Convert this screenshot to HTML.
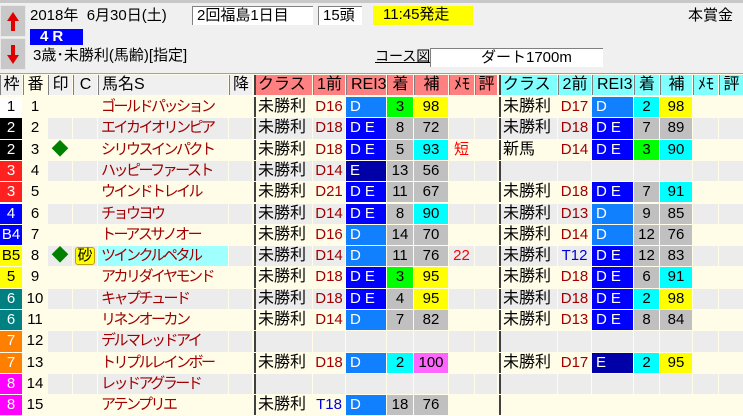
<!DOCTYPE html>
<html><head><meta charset="utf-8"><style>
*{margin:0;padding:0;box-sizing:border-box}
body{width:743px;height:416px;overflow:hidden;background:#fffde8;font-family:"Liberation Sans","Noto Sans CJK JP",sans-serif;position:relative}
.top{position:absolute;left:0;top:0;width:743px;height:74px;background:#f0f0f0;border-top:3px solid #c8c8c8;border-bottom:1px solid #a0a0a0}
.a{position:absolute;font-size:15px;color:#000;white-space:nowrap;line-height:18px}
.btn{position:absolute;left:0;width:26px;height:32px;background:#c8c8c8;border:1px solid #e8e8e8}
.box{position:absolute;background:#fff;border-top:1px solid #808080;border-left:1px solid #808080;font-size:15px;line-height:18px;padding-left:4px}
.r{position:absolute;left:0;width:743px;height:21.3px;display:flex}
.r span{display:block;height:20.3px;margin-right:1px;font-size:15px;line-height:20px;white-space:nowrap;overflow:hidden;text-align:center}
.r span:nth-child(1){width:22px}.r span:nth-child(2){width:24px}.r span:nth-child(3){width:24px}.r span:nth-child(4){width:24px}
.r span:nth-child(5){width:130px;text-align:left;padding-left:3px}.r span:nth-child(6){width:23px;margin-right:2px}
.r span:nth-child(7){width:58px;border-left:2px solid #404040;text-align:left;padding-left:2px;font-size:16px}.r span:nth-child(8){width:32px}.r span:nth-child(9){width:40px;text-align:left;padding-left:4px}
.r span:nth-child(10){width:26px}.r span:nth-child(11){width:34px}.r span:nth-child(12){width:25px}.r span:nth-child(13){width:22px;margin-right:2px}
.r span:nth-child(14){width:58px;border-left:2px solid #404040;text-align:left;padding-left:2px;font-size:16px}.r span:nth-child(15){width:33px}.r span:nth-child(16){width:41px;text-align:left;padding-left:4px}
.r span:nth-child(17){width:25px}.r span:nth-child(18){width:32px}.r span:nth-child(19){width:25px}.r span:nth-child(20){width:24px;margin-right:0}
.o span{background:#fffde8}.e span{background:#ececec}
.r span:nth-child(2){background:#fffde8}
.r span:nth-child(5){color:#a00000;letter-spacing:-2.5px}
.r span:nth-child(8),.r span:nth-child(15){color:#a00000}
.h span{background:#f0f0f0;border-left:1px solid #808080;color:#000;font-size:16px}
.h span:nth-child(n+7):nth-child(-n+13){background:#ff8080}
.h span:nth-child(n+14){background:#80ffff}
.h span:nth-child(5){color:#000;letter-spacing:0;padding-left:3px}
.h span:nth-child(8),.h span:nth-child(15){color:#000}
.r .g{background:#c0c0c0}.r .gr{background:#00ff00}.r .c{background:#00ffff}.r .y{background:#ffff00}.r .m{background:#ff66ff}
.r .d{background:#1080ff;color:#fff}.r .de{background:#0000ff;color:#fff;letter-spacing:4px}.r .en{background:#0000a8;color:#fff}
.w1{background:#fff!important}.w2{background:#000!important;color:#fff}.w3{background:#ff2020!important;color:#fff}.w4{background:#0000ff!important;color:#fff}
.w5{background:#ffff00!important}.w6{background:#008080!important;color:#fff}.w7{background:#ff8000!important;color:#fff}.w8{background:#ff00ff!important;color:#fff}
.dia{color:#008000;font-size:17px!important}
</style></head><body>
<div class="top">
<div class="btn" style="top:2px"><svg width="24" height="30"><path d="M12 6 L6 15 H10 V25 H14 V15 H18 Z" fill="#e00000"/></svg></div>
<div class="btn" style="top:35px"><svg width="24" height="30"><path d="M12 25 L6 16 H10 V6 H14 V16 H18 Z" fill="#e00000"/></svg></div>
<div class="a" style="left:30px;top:4px">2018年&nbsp; 6月30日(土)</div>
<div class="box" style="left:192px;top:3px;width:121px;height:19px">2回福島1日目</div>
<div class="box" style="left:318px;top:3px;width:44px;height:19px">15頭</div>
<div style="position:absolute;left:373px;top:3px;width:100px;height:19px;background:#ffff00;font-size:15px;line-height:18px;padding-left:10px">11:45発走</div>
<div class="a" style="left:688px;top:4px">本賞金</div>
<div style="position:absolute;left:30px;top:26px;width:53px;height:16px;background:#0000ff;color:#fff;font-size:15px;line-height:16px;padding-left:10px;font-weight:bold;letter-spacing:4px">4R</div>
<div class="a" style="left:33px;top:44px">3歳･未勝利(馬齢)[指定]</div>
<div class="a" style="left:375px;top:44px;font-size:14px;text-decoration:underline">コース図</div>
<div class="box" style="left:430px;top:45px;width:173px;height:19px;padding-left:50px">ダート1700m</div>
</div>
<div class="r h" style="top:75px"><span>枠</span><span>番</span><span>印</span><span>C</span><span>馬名S</span><span>降</span><span>クラス</span><span>1前</span><span>REI3</span><span>着</span><span>補</span><span>ﾒﾓ</span><span>評</span><span>クラス</span><span>2前</span><span>REI3</span><span>着</span><span>補</span><span>ﾒﾓ</span><span>評</span></div>

<div class="r o" style="top:97px"><span class="w1">1</span><span>1</span><span></span><span></span><span>ゴールドパッション</span><span></span><span>未勝利</span><span>D16</span><span class="d">D</span><span class="gr">3</span><span class="y">98</span><span></span><span></span><span>未勝利</span><span>D17</span><span class="d">D</span><span class="c">2</span><span class="y">98</span><span></span><span></span></div>
<div class="r e" style="top:118.3px"><span class="w2">2</span><span>2</span><span></span><span></span><span>エイカイオリンピア</span><span></span><span>未勝利</span><span>D18</span><span class="de">DE</span><span class="g">8</span><span class="g">72</span><span></span><span></span><span>未勝利</span><span>D18</span><span class="de">DE</span><span class="g">7</span><span class="g">89</span><span></span><span></span></div>
<div class="r o" style="top:139.6px"><span class="w2">2</span><span>3</span><span class="dia">◆</span><span></span><span>シリウスインパクト</span><span></span><span>未勝利</span><span>D18</span><span class="de">DE</span><span class="g">5</span><span class="c">93</span><span style="color:#f00">短</span><span></span><span>新馬</span><span>D14</span><span class="de">DE</span><span class="gr">3</span><span class="c">90</span><span></span><span></span></div>
<div class="r e" style="top:160.9px"><span class="w3">3</span><span>4</span><span></span><span></span><span>ハッピーファースト</span><span></span><span>未勝利</span><span>D14</span><span class="en">E</span><span class="g">13</span><span class="g">56</span><span></span><span></span><span></span><span></span><span></span><span></span><span></span><span></span><span></span></div>
<div class="r o" style="top:182.2px"><span class="w3">3</span><span>5</span><span></span><span></span><span>ウインドトレイル</span><span></span><span>未勝利</span><span>D21</span><span class="de">DE</span><span class="g">11</span><span class="g">67</span><span></span><span></span><span>未勝利</span><span>D18</span><span class="de">DE</span><span class="g">7</span><span class="c">91</span><span></span><span></span></div>
<div class="r e" style="top:203.5px"><span class="w4">4</span><span>6</span><span></span><span></span><span>チョウヨウ</span><span></span><span>未勝利</span><span>D14</span><span class="de">DE</span><span class="g">8</span><span class="c">90</span><span></span><span></span><span>未勝利</span><span>D13</span><span class="d">D</span><span class="g">9</span><span class="g">85</span><span></span><span></span></div>
<div class="r o" style="top:224.8px"><span class="w4">B4</span><span>7</span><span></span><span></span><span>トーアスサノオー</span><span></span><span>未勝利</span><span>D16</span><span class="d">D</span><span class="g">14</span><span class="g">70</span><span></span><span></span><span>未勝利</span><span>D14</span><span class="d">D</span><span class="g">12</span><span class="g">76</span><span></span><span></span></div>
<div class="r e" style="top:246.1px"><span class="w5">B5</span><span>8</span><span class="dia">◆</span><span><b style="display:inline-block;background:#ffff00;border:1px solid #c0a000;border-radius:3px;font-weight:normal;line-height:16px;width:20px">砂</b></span><span style="background:#a0ffff">ツインクルペタル</span><span></span><span>未勝利</span><span>D14</span><span class="d">D</span><span class="g">11</span><span class="g">76</span><span style="color:#f00">22</span><span></span><span>未勝利</span><span style="color:#0000e0">T12</span><span class="de">DE</span><span class="g">12</span><span class="g">83</span><span></span><span></span></div>
<div class="r o" style="top:267.4px"><span class="w5">5</span><span>9</span><span></span><span></span><span>アカリダイヤモンド</span><span></span><span>未勝利</span><span>D18</span><span class="de">DE</span><span class="gr">3</span><span class="y">95</span><span></span><span></span><span>未勝利</span><span>D18</span><span class="de">DE</span><span class="g">6</span><span class="c">91</span><span></span><span></span></div>
<div class="r e" style="top:288.7px"><span class="w6">6</span><span>10</span><span></span><span></span><span>キャプチュード</span><span></span><span>未勝利</span><span>D18</span><span class="de">DE</span><span class="g">4</span><span class="y">95</span><span></span><span></span><span>未勝利</span><span>D18</span><span class="de">DE</span><span class="c">2</span><span class="y">98</span><span></span><span></span></div>
<div class="r o" style="top:310px"><span class="w6">6</span><span>11</span><span></span><span></span><span>リネンオーカン</span><span></span><span>未勝利</span><span>D14</span><span class="d">D</span><span class="g">7</span><span class="g">82</span><span></span><span></span><span>未勝利</span><span>D13</span><span class="de">DE</span><span class="g">8</span><span class="g">84</span><span></span><span></span></div>
<div class="r e" style="top:331.3px"><span class="w7">7</span><span>12</span><span></span><span></span><span>デルマレッドアイ</span><span></span><span></span><span></span><span></span><span></span><span></span><span></span><span></span><span></span><span></span><span></span><span></span><span></span><span></span><span></span></div>
<div class="r o" style="top:352.6px"><span class="w7">7</span><span>13</span><span></span><span></span><span>トリプルレインボー</span><span></span><span>未勝利</span><span>D18</span><span class="d">D</span><span class="c">2</span><span class="m">100</span><span></span><span></span><span>未勝利</span><span>D17</span><span class="en">E</span><span class="c">2</span><span class="y">95</span><span></span><span></span></div>
<div class="r e" style="top:373.9px"><span class="w8">8</span><span>14</span><span></span><span></span><span>レッドアグラード</span><span></span><span></span><span></span><span></span><span></span><span></span><span></span><span></span><span></span><span></span><span></span><span></span><span></span><span></span><span></span></div>
<div class="r o" style="top:395.2px"><span class="w8">8</span><span>15</span><span></span><span></span><span>アテンプリエ</span><span></span><span>未勝利</span><span style="color:#0000e0">T18</span><span class="d">D</span><span class="g">18</span><span class="g">76</span><span></span><span></span><span></span><span></span><span></span><span></span><span></span><span></span><span></span></div>
</body></html>
